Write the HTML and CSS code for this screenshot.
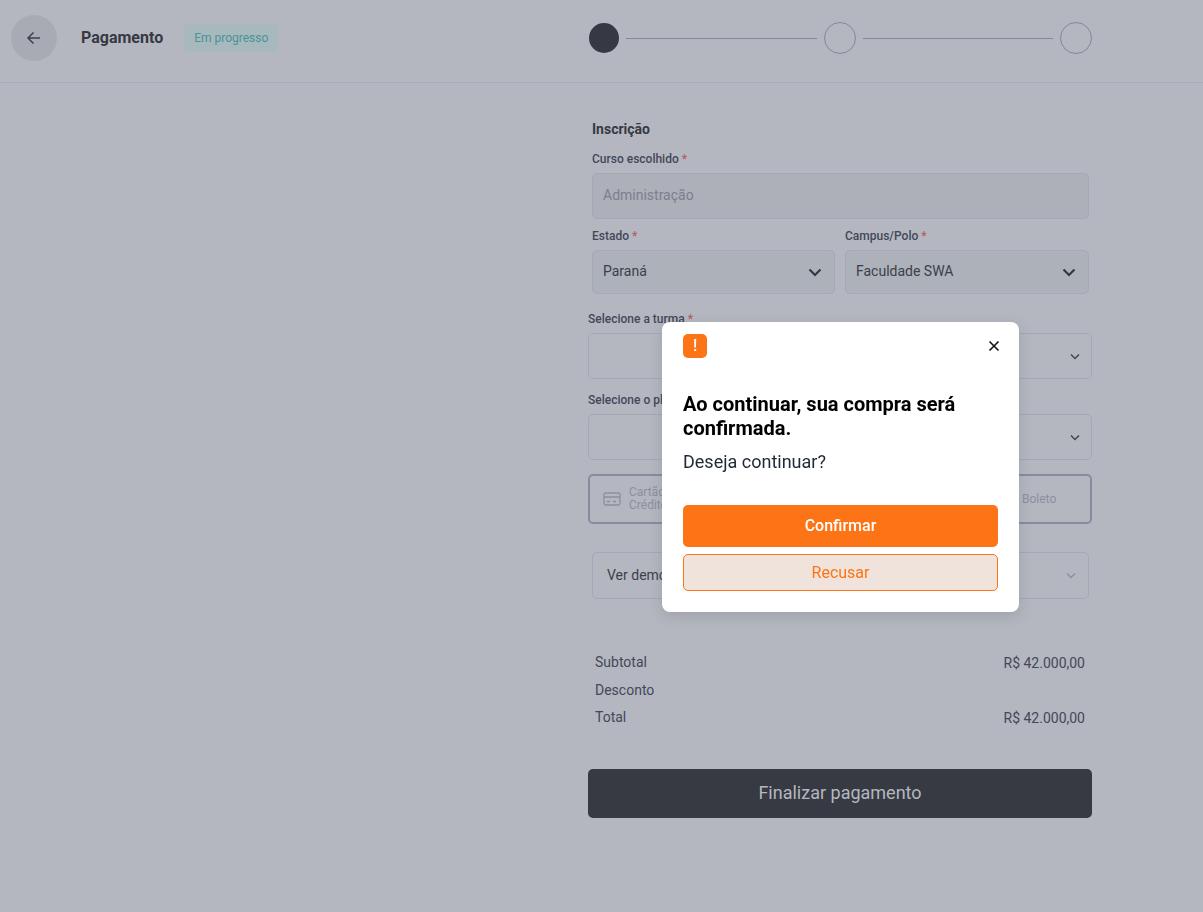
FILE: index.html
```html
<!DOCTYPE html>
<html lang="pt-BR">
	<head>
		<meta charset="UTF-8" />
		<meta name="viewport" content="width=device-width, initial-scale=1.0" />
		<title>Pagamento</title>
		<link rel="stylesheet" href="styles.css">
	</head>
	<body>
		<header class="topbar">
			<div class="topbar-left">
				<button class="back-button" aria-label="Voltar">
					<svg width="18" height="18" viewBox="0 0 18 18" fill="none" stroke="#3f424c" stroke-width="1.5"><path d="M15 9H3M8.5 3.5 3 9l5.5 5.5"/></svg>
				</button>
				<span class="page-title">Pagamento</span>
				<span class="badge">Em progresso</span>
			</div>
			<div class="stepper">
				<span class="step step-done"></span>
				<span class="step-line"></span>
				<span class="step"></span>
				<span class="step-line"></span>
				<span class="step"></span>
			</div>
		</header>

		<main class="content">
			<section class="enroll">
				<h2>Inscrição</h2>
				<label class="field-label">Curso escolhido <em>*</em></label>
				<div class="input input-disabled">Administração</div>
				<div class="two-cols">
					<div>
						<label class="field-label">Estado <em>*</em></label>
						<div class="input select">
							Paraná
							<svg class="chevron" width="14" height="9" viewBox="0 0 14 9" fill="none" stroke="#363943" stroke-width="2.2"><path d="M1.5 1.5 7 7l5.5-5.5"/></svg>
						</div>
					</div>
					<div>
						<label class="field-label">Campus/Polo <em>*</em></label>
						<div class="input select">
							Faculdade SWA
							<svg class="chevron" width="14" height="9" viewBox="0 0 14 9" fill="none" stroke="#363943" stroke-width="2.2"><path d="M1.5 1.5 7 7l5.5-5.5"/></svg>
						</div>
					</div>
				</div>
			</section>

			<label class="field-label">Selecione a turma <em>*</em></label>
			<div class="input select select-empty">
				<svg class="chevron" width="10" height="7" viewBox="0 0 10 7" fill="none" stroke="#434650" stroke-width="1.5"><path d="M1 1.5l4 4 4-4"/></svg>
			</div>

			<label class="field-label plan-label">Selecione o plano <em>*</em></label>
			<div class="input select select-empty">
				<svg class="chevron" width="10" height="7" viewBox="0 0 10 7" fill="none" stroke="#434650" stroke-width="1.5"><path d="M1 1.5l4 4 4-4"/></svg>
			</div>

			<div class="pay-methods">
				<div class="pay-option">
					<svg width="18" height="14" viewBox="0 0 18 14" fill="none" stroke="#8b90a0" stroke-width="1.3"><rect x="1" y="1" width="16" height="12" rx="1.5"/><path d="M1 5h16M4 9.500h3M10 9.500h3"/></svg>
					<span>Cartão de<br>Crédito</span>
				</div>
				<div class="pay-option pay-boleto">
					<span>Boleto</span>
				</div>
			</div>

			<section class="enroll">
				<div class="input demo-row">
					Ver demonstrativo
					<svg class="chevron" width="10" height="7" viewBox="0 0 10 7" fill="none" stroke="#8b90a0" stroke-width="1.4"><path d="M1 1.5l4 4 4-4"/></svg>
				</div>
				<div class="totals">
					<div class="total-row"><span>Subtotal</span><span class="total-value">R$ 42.000,00</span></div>
					<div class="total-row"><span>Desconto</span></div>
					<div class="total-row"><span>Total</span><span class="total-value">R$ 42.000,00</span></div>
				</div>
			</section>

			<button class="finish-button">Finalizar pagamento</button>
		</main>

		<div class="overlay">
			<div class="modal">
				<div class="modal-top">
					<span class="alert-icon">!</span>
					<svg class="close-icon" width="12" height="12" viewBox="0 0 12 12" fill="none" stroke="#111" stroke-width="1.6"><path d="M1.5 1.500l9 9M10.500 1.500l-9 9"/></svg>
				</div>
				<h3>Ao continuar, sua compra será confirmada.</h3>
				<p>Deseja continuar?</p>
				<button class="btn-confirm">Confirmar</button>
				<button class="btn-refuse">Recusar</button>
			</div>
		</div>
	</body>
</html>
```

FILE: styles.css
```css
* {
	box-sizing: border-box;
}
body {
	margin: 0;
	height: 912px;
	overflow: hidden;
	background-color: #b4b7bf;
	color: #3c3f4a;
	font-family: Roboto, Arial, sans-serif;
}
button {
	font-family: inherit;
	cursor: pointer;
}

.topbar {
	height: 83px;
	border-bottom: 1px solid #a9acb6;
	display: grid;
	grid-template-columns: 589px 503px;
	padding-top: 15px;
}
.topbar-left {
	display: flex;
	align-items: flex-start;
	padding-left: 11px;
}
.back-button {
	width: 46px;
	height: 46px;
	border: none;
	border-radius: 50%;
	background-color: #a8abb4;
	display: flex;
	align-items: center;
	justify-content: center;
	padding: 0;
}
.page-title {
	margin-left: 24px;
	margin-top: 13px;
	font-size: 16px;
	line-height: 20px;
	font-weight: 700;
	color: #363943;
}
.badge {
	margin-left: 21px;
	margin-top: 9px;
	height: 28px;
	padding: 0 10px;
	border-radius: 5px;
	background-color: #a7b9bd;
	color: #4a9396;
	font-size: 12px;
	line-height: 28px;
}
.stepper {
	display: flex;
	align-items: center;
	height: 46px;
}
.step {
	width: 32px;
	height: 32px;
	flex: none;
	border: 1px solid #858896;
	border-radius: 50%;
}
.step-done {
	width: 30px;
	height: 30px;
	background-color: #363943;
	border: none;
}
.step-line {
	flex: 1;
	height: 1px;
	background-color: #858896;
	margin: 0 7px;
}

.content {
	width: 504px;
	margin-left: 588px;
	padding-top: 37px;
}
.enroll {
	padding: 0 3px 0 4px;
}
h2 {
	margin: 0 0 13px;
	font-size: 14px;
	line-height: 18px;
	font-weight: 700;
	color: #363943;
}
.field-label {
	display: block;
	font-size: 12px;
	line-height: 16px;
	font-weight: 500;
	color: #44475a;
	margin-bottom: 6px;
}
.field-label em {
	font-style: normal;
	color: #b55a68;
}
.input {
	display: flex;
	align-items: center;
	height: 46px;
	padding: 0 10px 2px;
	border: 1px solid #a5a9b6;
	border-radius: 5px;
	font-size: 14px;
	color: #3c3f4a;
}
.input-disabled {
	background-color: #adb0b9;
	color: #7a7f8e;
	margin-bottom: 9px;
}
.two-cols {
	display: grid;
	grid-template-columns: 243px 244px;
	gap: 10px;
}
.select {
	justify-content: space-between;
	background-color: #adb1ba;
	height: 44px;
	padding-right: 12px;
}
.select .chevron {
	margin-top: 2px;
}
.select-empty {
	height: 46px;
	background: none;
	justify-content: flex-end;
	padding-right: 11px;
}
.enroll + .field-label {
	margin-top: 17px;
}
.plan-label {
	margin-top: 13px;
}
.pay-methods {
	display: grid;
	grid-template-columns: 1fr 1fr;
	height: 50px;
	margin-top: 14px;
	margin-bottom: 28px;
	border: 2px solid #858ca0;
	border-radius: 5px;
}
.pay-option {
	display: flex;
	align-items: center;
	gap: 8px;
	padding-left: 13px;
	font-size: 12px;
	line-height: 13px;
	color: #8b90a0;
}
.pay-boleto {
	padding-left: 182px;
}
.demo-row {
	justify-content: space-between;
	height: 47px;
	padding: 0 12px 2px 14px;
}
.demo-row .chevron {
	margin-top: 2px;
}
.totals {
	margin-top: 54px;
	padding: 0 4px 0 3px;
	font-size: 14px;
	color: #44475a;
}
.total-row {
	display: flex;
	justify-content: space-between;
	line-height: 18px;
	margin-bottom: 9.5px;
}
.total-value {
	margin-top: 1px;
	margin-bottom: -1px;
}
.finish-button {
	display: block;
	width: 100%;
	height: 49px;
	margin-top: 43px;
	padding-bottom: 3px;
	border: none;
	border-radius: 5px;
	background-color: #373a43;
	color: #b4b7bf;
	font-size: 18px;
}

.overlay {
	position: fixed;
	left: 0;
	top: 0;
	width: 100%;
	height: 100%;
}
.modal {
	position: absolute;
	left: 662px;
	top: 322px;
	width: 357px;
	height: 290px;
	padding: 12px 21px 21px;
	background-color: #fff;
	border-radius: 8px;
	box-shadow: 0 4px 14px rgba(60, 65, 85, 0.18);
}
.modal-top {
	display: flex;
	justify-content: space-between;
	align-items: center;
}
.close-icon {
	margin-right: -2px;
}
.alert-icon {
	width: 24px;
	height: 24px;
	border-radius: 5px;
	background-color: #fc7416;
	color: #fff;
	font-size: 16px;
	line-height: 23px;
	font-weight: 500;
	text-align: center;
}
.modal h3 {
	margin: 34px 0 0;
	font-size: 20px;
	line-height: 24px;
	font-weight: 700;
	color: #000;
}
.modal p {
	margin: 11px 0 0;
	font-size: 18px;
	line-height: 22px;
	color: #1f2937;
}
.btn-confirm,
.btn-refuse {
	display: block;
	width: 315px;
	border-radius: 5px;
	font-size: 16px;
}
.btn-confirm {
	height: 42px;
	margin-top: 32px;
	padding-bottom: 3px;
	border: none;
	background-color: #fc7416;
	color: #fff;
	font-weight: 500;
}
.btn-refuse {
	height: 37px;
	margin-top: 7px;
	border: 1px solid #fc7416;
	background-color: #f0e3dc;
	color: #fc7416;
}
```
